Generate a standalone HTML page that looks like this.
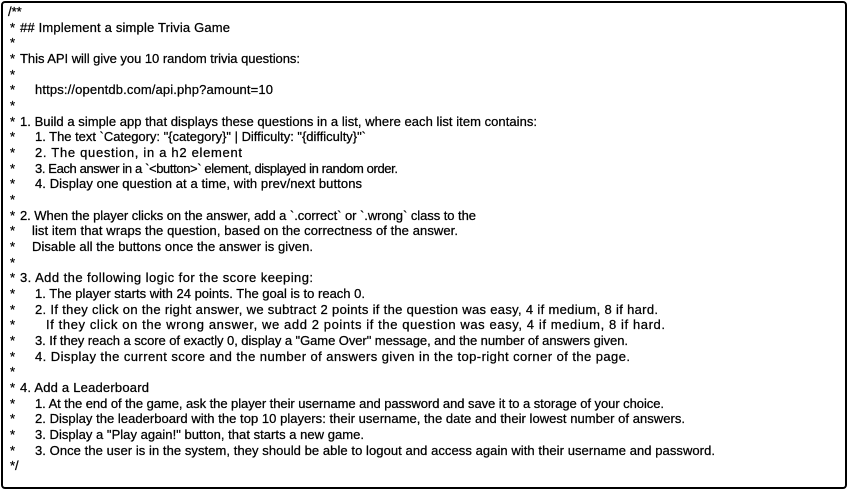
<!DOCTYPE html>
<html><head><meta charset="utf-8"><style>
html,body{margin:0;padding:0;background:#fff;width:849px;height:492px;overflow:hidden}
svg{position:absolute;left:0;top:0}
text{font-family:"Liberation Sans",sans-serif;font-size:13px;fill:#000;stroke:#000;stroke-width:0.25}
</style></head><body>
<svg width="849" height="492" xmlns="http://www.w3.org/2000/svg">
<rect x="2" y="2" width="844" height="486" rx="3" fill="none" stroke="#000" stroke-width="2"/>
<text x="8" y="16">/**</text>
<g>
<text x="10" y="32">*</text><text x="20" y="32" textLength="210" lengthAdjust="spacing">## Implement a simple Trivia Game</text>
<text x="10" y="47">*</text>
<text x="10" y="63">*</text><text x="20" y="63" textLength="280" lengthAdjust="spacing">This API will give you 10 random trivia questions:</text>
<text x="10" y="79">*</text>
<text x="10" y="94">*</text><text x="35" y="94" textLength="238" lengthAdjust="spacing">https://opentdb.com/api.php?amount=10</text>
<text x="10" y="110">*</text>
<text x="10" y="126">*</text><text x="20" y="126" textLength="517" lengthAdjust="spacing">1. Build a simple app that displays these questions in a list, where each list item contains:</text>
<text x="10" y="141">*</text><text x="35" y="141" textLength="331" lengthAdjust="spacing">1. The text `Category: "{category}" | Difficulty: "{difficulty}"`</text>
<text x="10" y="157">*</text><text x="35" y="157" textLength="207" lengthAdjust="spacing">2. The question, in a h2 element</text>
<text x="10" y="173">*</text><text x="35" y="173" textLength="363" lengthAdjust="spacing">3. Each answer in a `&lt;button&gt;` element, displayed in random order.</text>
<text x="10" y="188">*</text><text x="35" y="188" textLength="327" lengthAdjust="spacing">4. Display one question at a time, with prev/next buttons</text>
<text x="10" y="204">*</text>
<text x="10" y="220">*</text><text x="20" y="220" textLength="456" lengthAdjust="spacing">2. When the player clicks on the answer, add a `.correct` or `.wrong` class to the</text>
<text x="10" y="235">*</text><text x="32" y="235" textLength="426" lengthAdjust="spacing">list item that wraps the question, based on the correctness of the answer.</text>
<text x="10" y="251">*</text><text x="32" y="251" textLength="281" lengthAdjust="spacing">Disable all the buttons once the answer is given.</text>
<text x="10" y="267">*</text>
<text x="10" y="282">*</text><text x="20" y="282" textLength="293" lengthAdjust="spacing">3. Add the following logic for the score keeping:</text>
<text x="10" y="298">*</text><text x="35" y="298" textLength="330" lengthAdjust="spacing">1. The player starts with 24 points. The goal is to reach 0.</text>
<text x="10" y="314">*</text><text x="35" y="314" textLength="623" lengthAdjust="spacing">2. If they click on the right answer, we subtract 2 points if the question was easy, 4 if medium, 8 if hard.</text>
<text x="10" y="329">*</text><text x="46" y="329" textLength="619" lengthAdjust="spacing">If they click on the wrong answer, we add 2 points if the question was easy, 4 if medium, 8 if hard.</text>
<text x="10" y="345">*</text><text x="35" y="345" textLength="593" lengthAdjust="spacing">3. If they reach a score of exactly 0, display a "Game Over" message, and the number of answers given.</text>
<text x="10" y="361">*</text><text x="35" y="361" textLength="595" lengthAdjust="spacing">4. Display the current score and the number of answers given in the top-right corner of the page.</text>
<text x="10" y="376">*</text>
<text x="10" y="392">*</text><text x="20" y="392" textLength="129" lengthAdjust="spacing">4. Add a Leaderboard</text>
<text x="10" y="408">*</text><text x="35" y="408" textLength="629" lengthAdjust="spacing">1. At the end of the game, ask the player their username and password and save it to a storage of your choice.</text>
<text x="10" y="423">*</text><text x="35" y="423" textLength="650" lengthAdjust="spacing">2. Display the leaderboard with the top 10 players: their username, the date and their lowest number of answers.</text>
<text x="10" y="439">*</text><text x="35" y="439" textLength="329" lengthAdjust="spacing">3. Display a "Play again!" button, that starts a new game.</text>
<text x="10" y="455">*</text><text x="35" y="455" textLength="680" lengthAdjust="spacing">3. Once the user is in the system, they should be able to logout and access again with their username and password.</text>
<text x="10" y="470">*/</text>
</g>
</svg>
</body></html>
